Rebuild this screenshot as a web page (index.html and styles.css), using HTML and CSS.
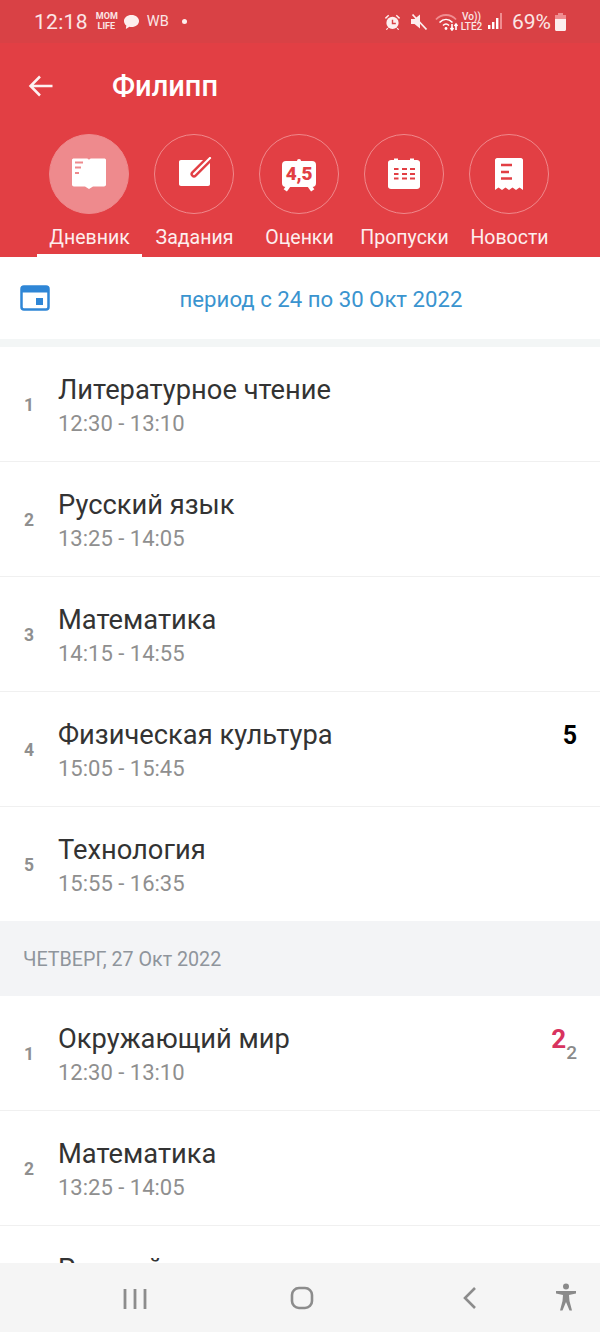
FILE: index.html
```html
<!DOCTYPE html>
<html lang="ru">
<head>
<meta charset="utf-8">
<title>Дневник</title>
<link rel="stylesheet" href="styles.css">
</head>
<body>
<div class="screen">
  <header class="header">
    <div class="status">
      <span class="clock">12:18</span>
      <span class="momlife">MOM<br>LIFE</span>
      <svg class="ic-chat" viewBox="0 0 18 17"><path d="M9 1c4.600 0 8 2.800 8 6.400s-3.400 6.400-8 6.400c-.8 0-1.500-.1-2.200-.3L3 16l.5-3.700C2 11 1 9.300 1 7.400 1 3.800 4.400 1 9 1z"/></svg>
      <span class="wb">WB</span>
      <span class="dot"></span>
      <span class="status-spacer"></span>
      <svg class="ic-alarm" viewBox="0 0 18 18"><circle cx="9" cy="10" r="6.500"/><path d="M1 4.500 4.500 1.300 5.500 2.500 2 5.700zM17 4.500 13.500 1.300 12.500 2.500 16 5.700zM3.500 15l-1.500 2 1 .6 1.500-1.800zM14.500 15l1.500 2-1 .6-1.500-1.800z"/><path class="alarm-hand" d="M9 6.500V10.500H12.500"/></svg>
      <svg class="ic-mute" viewBox="0 0 18 18"><path d="M1 6h3.500L10 1.500v14L4.500 11H1z"/><path class="mute-slash" d="M2.500 1.500 16.500 16.500"/></svg>
      <svg class="ic-wifi" viewBox="0 0 24 18"><path class="wifi-dim" d="M1 6.500C6.500 .5 15.500 .5 21 6.500"/><path class="wifi-line" d="M4.500 9.500c4-4 9-4 13 0M8 12.500c2-2 4-2 6 0"/><circle cx="11" cy="15.500" r="1.400" fill="#fff"/><path class="wifi-line" d="M17 11v6M15.500 15l1.500 2 1.500-2M21 17v-6M19.500 13l1.500-2 1.500 2"/></svg>
      <span class="volte">Vo))<br>LTE2</span>
      <svg class="ic-signal" viewBox="0 0 16 17"><rect x="1" y="12" width="2.400" height="4" fill="#fff"/><rect x="5" y="9" width="2.400" height="7" fill="#fff"/><rect x="9" y="5" width="2.400" height="11" fill="#fff"/><rect x="13" y="0" width="2" height="16" fill="#f08d90"/></svg>
      <span class="percent">69%</span>
      <svg class="ic-batt" viewBox="0 0 13 18"><path class="batt-top" d="M4 0h5v2h3v6H1V2h3z"/><path d="M1 6h11v10.500c0 .8-.6 1.500-1.500 1.500h-8C1.600 18 1 17.300 1 16.500z" fill="#fdeeee"/></svg>
    </div>
    <div class="titlebar">
      <svg class="ic-back" viewBox="0 0 26 24"><path d="M24.500 12H2.500M12 2.500 2.500 12 12 21.500"/></svg>
      <h1 class="title">Филипп</h1>
    </div>
    <nav class="tabs">
      <div class="tab tab-active">
        <span class="circle circle-active">
          <svg class="tab-ic" viewBox="0 0 36 34"><path fill="#fff" d="M1 3c0-1 .8-1.500 2-1.500h12c1.500 0 2.300.5 3 1.200.7-.7 1.500-1.200 3-1.200h12c1.200 0 2 .5 2 1.500v24.500c0 1-.8 2-2 2H22l-4 2.500-4-2.500H3c-1.200 0-2-1-2-2z"/><path class="tab-cut-light" d="M4 5.500h8M4 10.500h6M4 16h4"/></svg>
        </span>
        <span class="tab-label">Дневник</span>
      </div>
      <div class="tab">
        <span class="circle">
          <svg class="tab-ic" viewBox="0 0 36 34"><path fill="#fff" d="M5 3h27c1.200 0 2 .8 2 2v22c0 1.200-.8 2-2 2H5c-1.200 0-2-.8-2-2V5c0-1.200.8-2 2-2z"/><path class="clip-red" d="M18 17 34 1"/><path class="clip-white" d="M18 17 34 1"/></svg>
        </span>
        <span class="tab-label">Задания</span>
      </div>
      <div class="tab">
        <span class="circle">
          <span class="grade-ic"><span class="grade-nub"></span><span class="grade-ic-text">4,5</span></span>
        </span>
        <span class="tab-label">Оценки</span>
      </div>
      <div class="tab">
        <span class="circle">
          <svg class="tab-ic" viewBox="0 0 36 34"><path fill="#fff" d="M5 3h3V1.500h4V3h12V1.500h4V3h3c1.500 0 3 1 3 2.500v24c0 1.300-1.500 2.500-3 2.500H5c-1.500 0-3-1.200-3-2.500v-24C2 4 3.500 3 5 3z"/><path class="tab-cut" d="M8 12h4.500M16 12h5M24 12h5M8 17h4.500M16 17h5M24 17h5M8 21.500h4.500M16 21.500h5M24 21.500h5"/></svg>
        </span>
        <span class="tab-label">Пропуски</span>
      </div>
      <div class="tab">
        <span class="circle">
          <svg class="tab-ic" viewBox="0 0 36 34"><path fill="#fff" d="M6 1h24c1 0 2 1 2 2v30l-3.500-2.500L25 33l-3.500-2.500L18 33l-3.500-2.500L11 33l-3.500-2.500L4 33V3c0-1 1-2 2-2z"/><path class="tab-cut-thick" d="M10 8h11M10 15h8M10 21.500h11"/></svg>
        </span>
        <span class="tab-label">Новости</span>
      </div>
    </nav>
  </header>

  <div class="period">
    <svg class="ic-period" viewBox="0 0 30 26"><rect x="1.500" y="1.500" width="27" height="23" rx="2.500" class="period-frame"/><rect x="1.500" y="1.500" width="27" height="6" fill="#2f86d6"/><rect x="16" y="13" width="7" height="7" fill="#2f86d6"/></svg>
    <span class="period-text">период с 24 по 30 Окт 2022</span>
  </div>

  <main class="list">
    <div class="row"><span class="num">1</span><div class="lesson"><div class="subject">Литературное чтение</div><div class="time">12:30 - 13:10</div></div></div>
    <div class="row"><span class="num">2</span><div class="lesson"><div class="subject">Русский язык</div><div class="time">13:25 - 14:05</div></div></div>
    <div class="row"><span class="num">3</span><div class="lesson"><div class="subject">Математика</div><div class="time">14:15 - 14:55</div></div></div>
    <div class="row"><span class="num">4</span><div class="lesson"><div class="subject">Физическая культура</div><div class="time">15:05 - 15:45</div></div><span class="mark">5</span></div>
    <div class="row row-last"><span class="num">5</span><div class="lesson"><div class="subject">Технология</div><div class="time">15:55 - 16:35</div></div></div>
    <div class="day">ЧЕТВЕРГ, 27 Окт 2022</div>
    <div class="row"><span class="num">1</span><div class="lesson"><div class="subject">Окружающий мир</div><div class="time">12:30 - 13:10</div></div><span class="mark mark-low">2<sub class="mark-sub">2</sub></span></div>
    <div class="row"><span class="num">2</span><div class="lesson"><div class="subject">Математика</div><div class="time">13:25 - 14:05</div></div></div>
    <div class="row"><span class="num">3</span><div class="lesson"><div class="subject">Русский язык</div><div class="time">14:15 - 14:55</div></div></div>
  </main>

  <footer class="navbar">
    <svg class="nav-recent" viewBox="0 0 24 22"><path d="M2 1v20M12 1v20M22 1v20"/></svg>
    <svg class="nav-home" viewBox="0 0 24 24"><rect x="2" y="2" width="20" height="20" rx="7"/></svg>
    <svg class="nav-back" viewBox="0 0 14 24"><path d="M12 2 2 12l10 10"/></svg>
    <svg class="nav-access" viewBox="0 0 22 28"><circle cx="11" cy="3.500" r="3" fill="#8a8a8a"/><path fill="#8a8a8a" d="M1 8h20v2.500l-7 1.500 .5 6 2.500 9.500h-2.500L11 19l-3.500 8.500H5L7.500 18l.5-6-7-1.500z"/></svg>
  </footer>
</div>
</body>
</html>
```

FILE: styles.css
```css
* { box-sizing: border-box; }
html, body { margin: 0; padding: 0; height: 100%; }
body { font-family: Roboto, "Noto Sans", sans-serif; background: #fff; overflow: hidden; }
.screen { width: 600px; height: 1332px; display: flex; flex-direction: column; overflow: hidden; }

.header { background: #e23f44; color: #fff; height: 257px; flex: none; display: flex; flex-direction: column; }
.status { height: 43px; background: #d94145; display: flex; align-items: center; padding-left: 34px; padding-right: 33px; flex: none; color: #fbe6e6; }
.clock { font-size: 21px; letter-spacing: .3px; margin-right: 8px; }
.momlife { font-size: 9px; line-height: 9.500px; font-weight: 700; text-align: center; width: 21px; margin-right: 6px; }
.ic-chat { width: 17px; height: 16px; fill: #fdeeee; margin-right: 7px; }
.wb { font-size: 14.500px; margin-right: 13px; }
.dot { width: 5px; height: 5px; border-radius: 50%; background: #fdeeee; }
.status-spacer { flex: 1; }
.ic-alarm { width: 17px; height: 18px; fill: #fdeeee; margin-right: 9px; }
.alarm-hand { fill: none; stroke: #d94145; stroke-width: 1.500; }
.ic-mute { width: 18px; height: 18px; fill: #fdeeee; margin-right: 7px; }
.mute-slash { stroke: #fdeeee; stroke-width: 1.800; }
.ic-wifi { width: 24px; height: 18px; }
.wifi-dim { fill: none; stroke: #f08d90; stroke-width: 1.800; }
.wifi-line { fill: none; stroke: #fff; stroke-width: 1.600; }
.volte { font-size: 10px; line-height: 10px; font-weight: 500; text-align: center; width: 25px; margin-right: 3px; }
.ic-signal { width: 16px; height: 17px; margin-right: 9px; }
.percent { font-size: 21px; margin-right: 3px; }
.ic-batt { width: 13px; height: 18px; }
.batt-top { fill: #f08d90; }

.titlebar { height: 85px; display: flex; align-items: center; padding-left: 28px; flex: none; }
.ic-back { width: 26px; height: 24px; fill: none; stroke: #fdf1f1; stroke-width: 2.500; margin-right: 58px; }
.title { margin: 0; font-size: 29px; font-weight: 500; }

.tabs { display: flex; padding-left: 37px; margin-top: 6px; flex: 1; }
.tab { width: 105px; display: flex; flex-direction: column; align-items: center; border-bottom: 3px solid transparent; }
.tab-active { border-bottom-color: #fff; }
.circle { width: 80px; height: 80px; border-radius: 50%; border: 1.500px solid #f0888b; display: flex; align-items: center; justify-content: center; flex: none; margin-left: -1px; }
.circle-active { background: #ee8a8d; border-color: #ee8a8d; }
.tab-ic { width: 36px; height: 34px; }
.tab-cut { fill: none; stroke: #e23f44; stroke-width: 2; }
.tab-cut-thick { fill: none; stroke: #e23f44; stroke-width: 2.600; }
.tab-cut-light { fill: none; stroke: #ee8a8d; stroke-width: 2; }
.clip-red { fill: none; stroke: #e23f44; stroke-width: 7; stroke-linecap: round; }
.clip-white { fill: none; stroke: #fff; stroke-width: 2.200; stroke-linecap: round; }
.tab-label { font-size: 19.500px; line-height: 24px; margin-top: 12px; color: #fdeeee; white-space: nowrap; }
.grade-ic { width: 34px; height: 26px; background: #fff; border-radius: 4px; display: flex; align-items: center; justify-content: center; position: relative; }
.grade-ic::before, .grade-ic::after { content: ""; position: absolute; bottom: -4px; width: 4px; height: 6px; background: #fff; }
.grade-ic::before { left: 3px; transform: rotate(35deg); }
.grade-ic::after { right: 3px; transform: rotate(-35deg); }
.grade-nub { position: absolute; top: -2px; left: 15px; width: 4px; height: 3px; background: #fff; border-radius: 2px 2px 0 0; }
.grade-ic-text { color: #e23f44; font-size: 19px; line-height: 20px; font-weight: 900; letter-spacing: -.2px; }

.period { height: 82px; flex: none; background: #fff; display: flex; align-items: center; padding-left: 20px; }
.ic-period { width: 30px; height: 26px; margin-top: 0; }
.period-frame { fill: #fff; stroke: #2f86d6; stroke-width: 2.500; }
.period-text { flex: 1; text-align: center; font-size: 22.200px; color: #3a94cf; padding-right: 8px; position: relative; top: 1px; }

.list { flex: 1; min-height: 0; overflow: hidden; border-top: 8px solid #f3f6f6; }
.row { height: 115px; display: flex; align-items: center; border-bottom: 1px solid #f0f0f0; padding: 0 23px 0 24px; }
.row-last { border-bottom: none; height: 114px; }
.num { width: 34px; flex: none; font-size: 17.500px; font-weight: 700; color: #8f8f8f; position: relative; top: 1px; }
.lesson { flex: 1; padding-top: 3px; }
.subject { font-size: 27.300px; line-height: 32px; color: #333; }
.time { font-size: 22px; line-height: 26px; margin-top: 5px; color: #8f8f8f; }
.mark { font-size: 25px; font-weight: 700; color: #000; align-self: flex-start; margin-top: 29px; }
.mark-low { color: #d8335f; font-size: 26px; margin-top: 28px; }
.mark-sub { font-size: 19px; font-weight: 500; color: #8a8a8a; vertical-align: baseline; position: relative; top: 11px; }
.day { height: 75px; background: #f3f4f6; display: flex; align-items: center; padding-left: 23px; padding-top: 2px; font-size: 19.700px; color: #8f959c; }

.navbar { height: 69px; flex: none; background: #f5f5f5; position: relative; display: flex; align-items: center; }
.navbar svg { position: absolute; }
.nav-recent { left: 123px; top: 25px; width: 24px; height: 22px; fill: none; stroke: #8c8c8c; stroke-width: 2.800; }
.nav-home { left: 290px; top: 23px; width: 24px; height: 24px; fill: none; stroke: #8c8c8c; stroke-width: 2.600; }
.nav-back { left: 463px; top: 23px; width: 14px; height: 24px; fill: none; stroke: #8c8c8c; stroke-width: 2.600; }
.nav-access { left: 555px; top: 20px; width: 22px; height: 28px; }
```
